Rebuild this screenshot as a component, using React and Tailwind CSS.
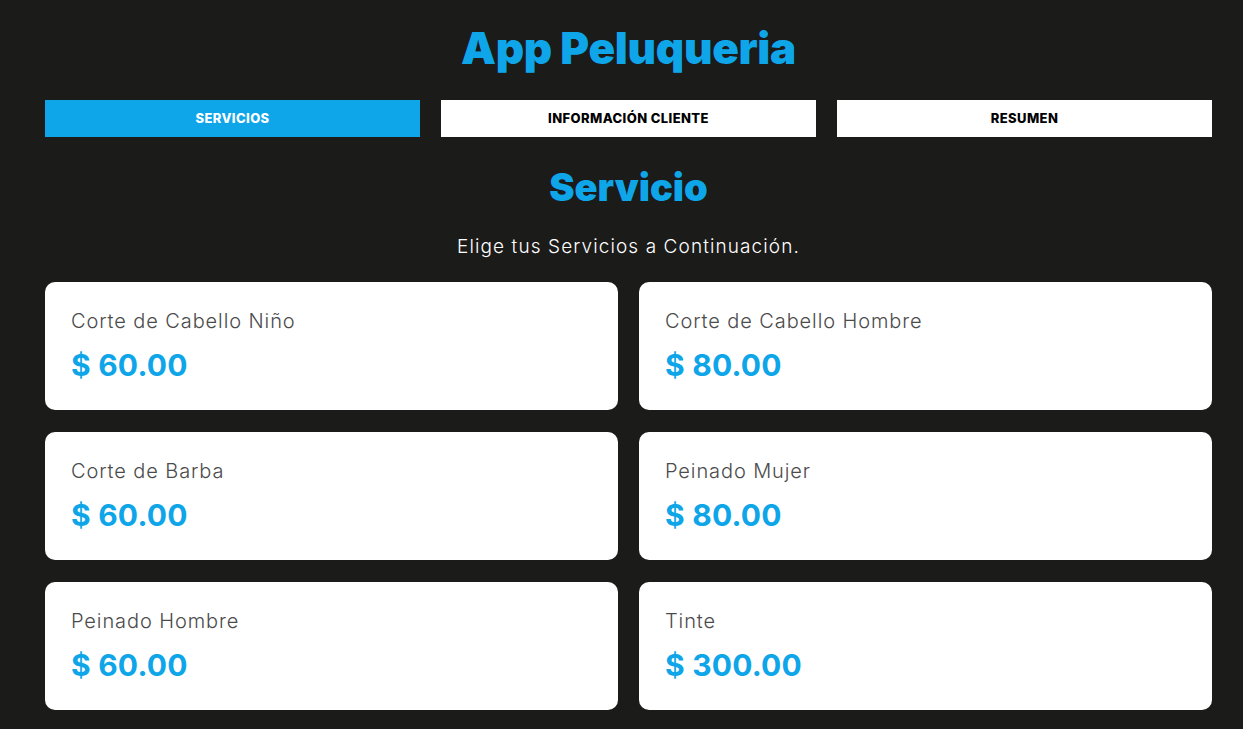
const tabs = [
  { id: 'servicios', label: 'SERVICIOS' },
  { id: 'cliente', label: 'INFORMACIÓN CLIENTE' },
  { id: 'resumen', label: 'RESUMEN' },
];

const servicios = [
  { id: 1, nombre: 'Corte de Cabello Niño', precio: '60.00' },
  { id: 2, nombre: 'Corte de Cabello Hombre', precio: '80.00' },
  { id: 3, nombre: 'Corte de Barba', precio: '60.00' },
  { id: 4, nombre: 'Peinado Mujer', precio: '80.00' },
  { id: 5, nombre: 'Peinado Hombre', precio: '60.00' },
  { id: 6, nombre: 'Tinte', precio: '300.00' },
];

const App = () => {
  const activo = 'servicios';

  return (
    <div className="min-h-screen bg-[#1b1b19] font-['Inter',sans-serif]">
      <div className="ml-[45px] w-[1167px] pt-[22px]">
        <h1 className="text-center text-[44px] leading-[52px] font-black tracking-[-0.3px] text-[#0ea5e9]">
          App Peluqueria
        </h1>

        {/* Tabs */}
        <nav className="mt-[26px] grid grid-cols-3 gap-[21px]">
          {tabs.map(tab => (
            <button
              key={tab.id}
              className={`h-[37px] text-[13px] font-extrabold tracking-[0.4px] ${activo === tab.id
                ? 'bg-[#0ea5e9] text-white'
                : 'bg-white text-black'
                }`}
            >
              {tab.label}
            </button>
          ))}
        </nav>

        <h2 className="mt-[27px] text-center text-[38px] leading-[46px] font-black text-[#0ea5e9]">
          Servicio
        </h2>
        <p className="mt-[24px] text-center text-[19px] leading-[26px] font-light tracking-[1.1px] text-white">
          Elige tus Servicios a Continuación.
        </p>

        {/* Servicios */}
        <div className="mt-[22px] grid grid-cols-2 gap-x-[21px] gap-y-[22px]">
          {servicios.map(servicio => (
            <div key={servicio.id} className="h-[128px] rounded-[10px] bg-white px-[26px] pt-[26px]">
              <p className="text-[20px] leading-[26px] font-light tracking-[0.9px] text-[#4b4b4b]">{servicio.nombre}</p>
              <p className="mt-[12px] text-[30px] leading-[38px] font-bold tracking-[0.2px] text-[#0ea5e9]">$ {servicio.precio}</p>
            </div>
          ))}
        </div>
      </div>
    </div>
  );
};

export default App;
